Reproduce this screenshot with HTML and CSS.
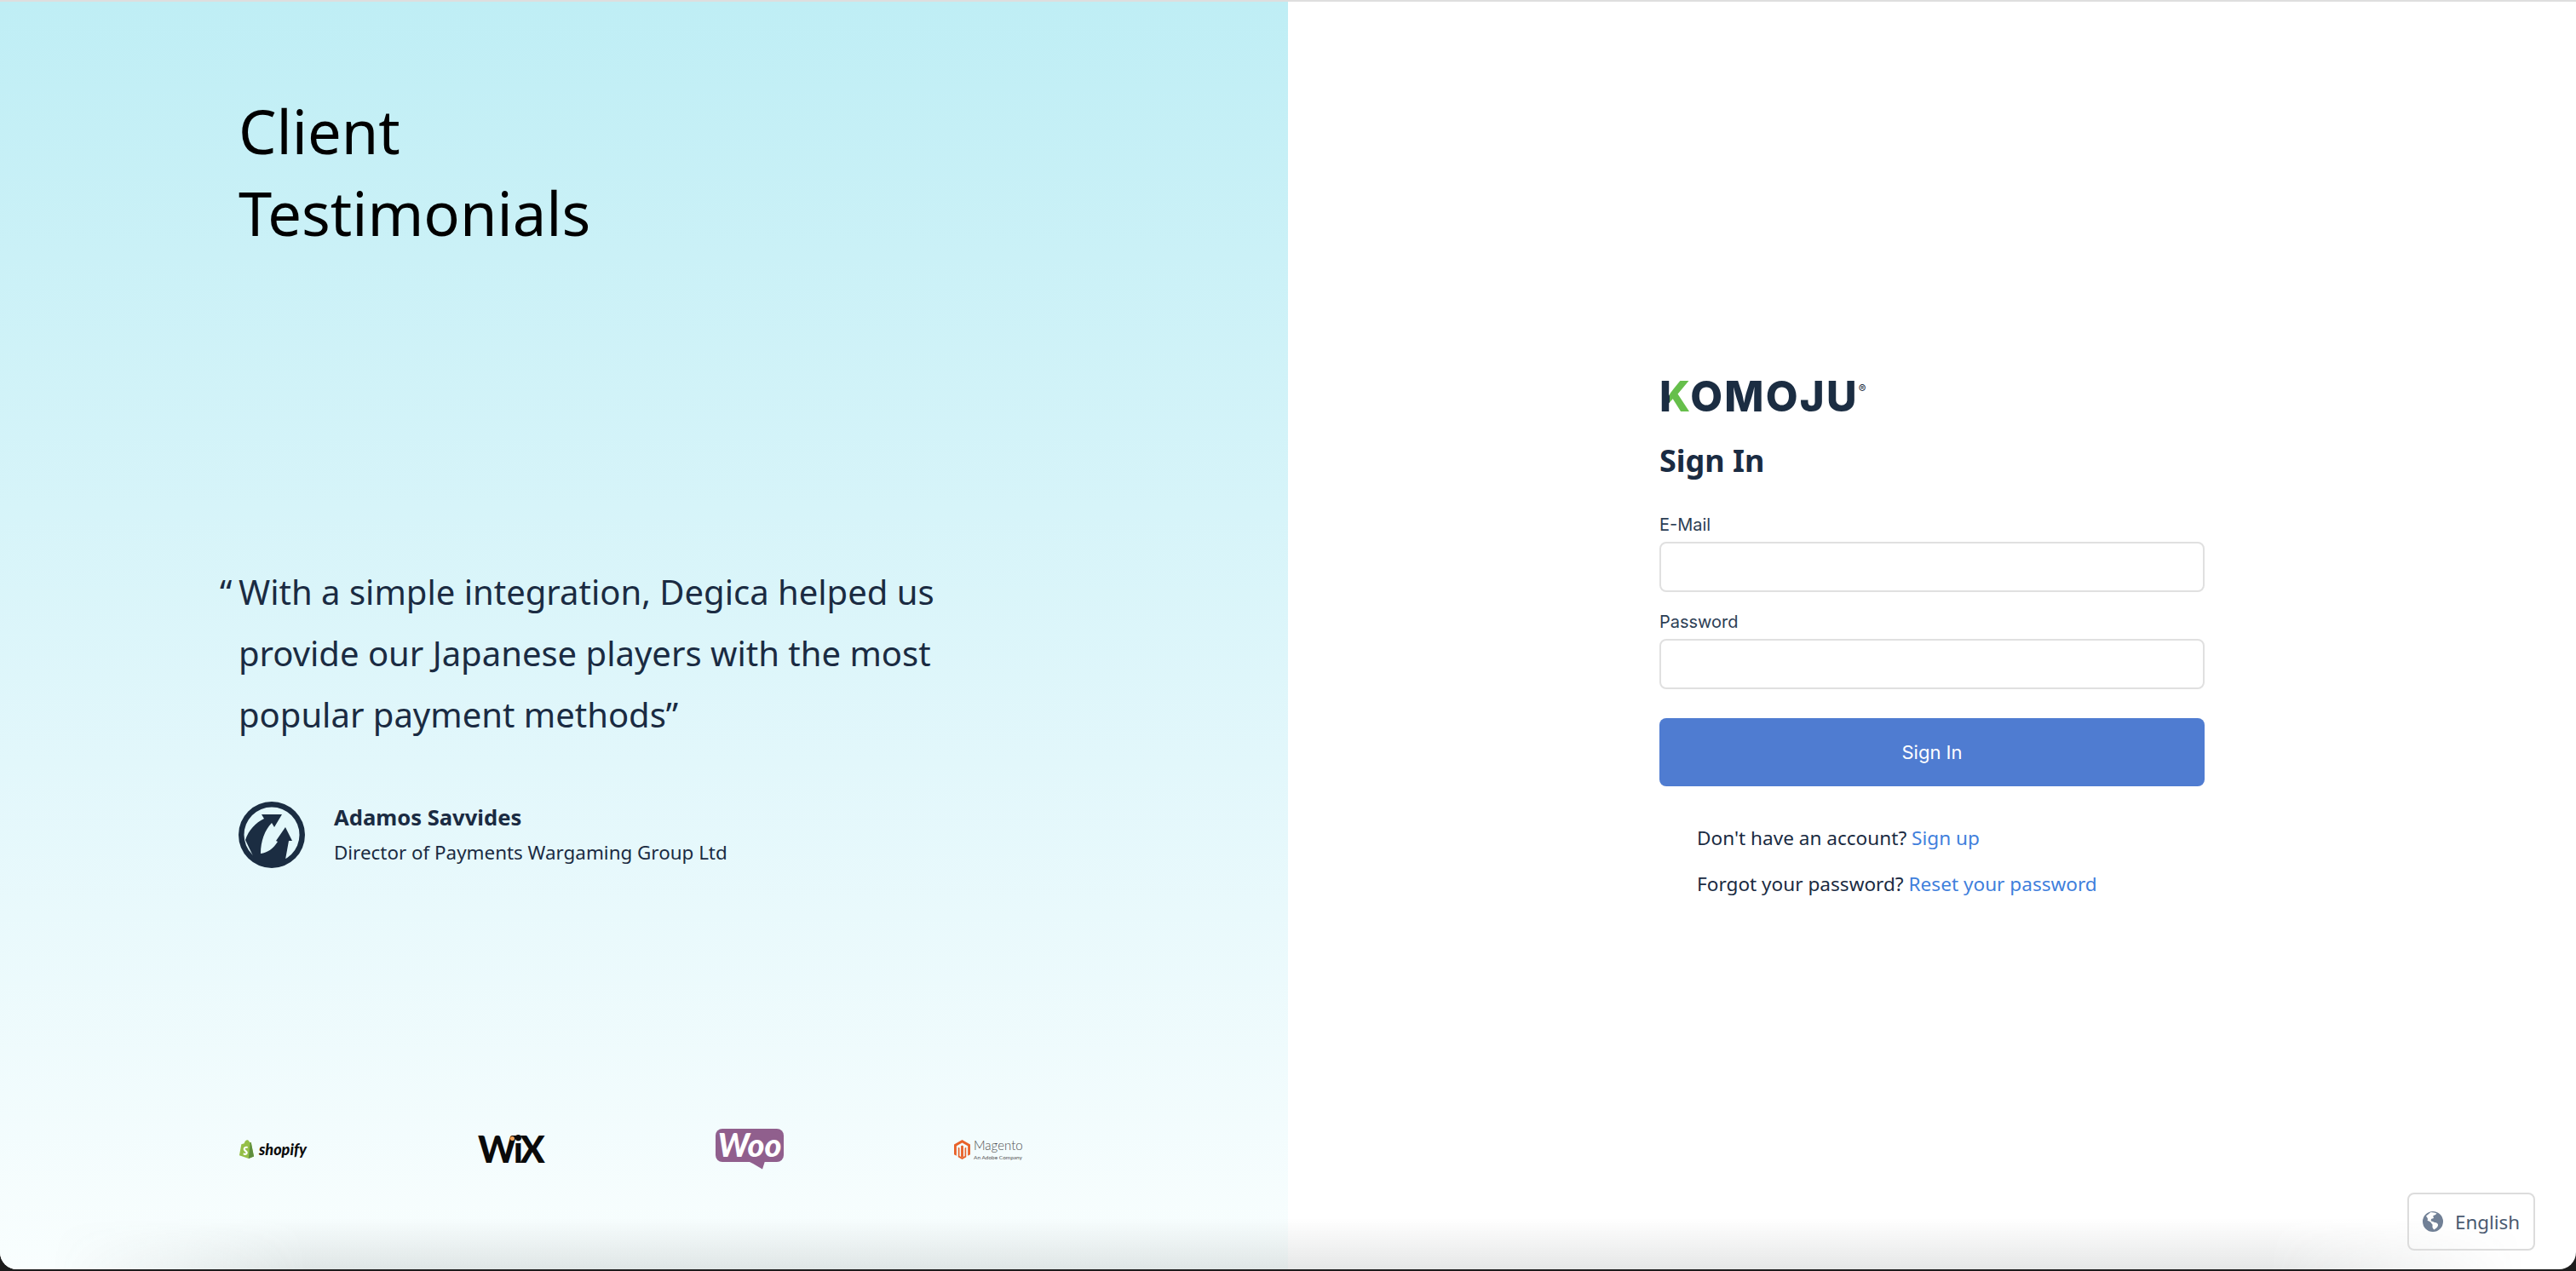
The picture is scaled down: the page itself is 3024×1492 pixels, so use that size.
FILE: index.html
```html
<!DOCTYPE html>
<html lang="en">
<head>
<meta charset="utf-8">
<title>KOMOJU Sign In</title>
<link rel="stylesheet" href="styles.css">
</head>
<body>
<div class="window">
  <main class="panels">
    <section class="promo">
      <h1 class="promo-title">Client<br>Testimonials</h1>
      <blockquote class="quote"><span class="quote-open">“</span>With a simple integration, Degica helped us provide our Japanese players with the most popular payment methods”</blockquote>
      <div class="person">
        <svg class="avatar" viewBox="0 0 78 78" aria-hidden="true">
          <circle cx="39" cy="39" r="39" fill="#1b2d42"/>
          <circle cx="39" cy="39" r="32.5" fill="#e3f8fb"/>
          <path fill="#1b2d42" d="M8 45C12 33 20 25 30 20L27 15 51 15 42 30 39 25C31 33 26 46 26 61 34 60 41 55 46 47L44 46 55 30 63 46 59 46 55 68 45 74 20 70Z"/>
        </svg>
        <div class="person-text">
          <div class="person-name">Adamos Savvides</div>
          <div class="person-role">Director of Payments Wargaming Group Ltd</div>
        </div>
      </div>
      <div class="logos">
        <div class="logo logo-shopify">
          <svg class="shopify-bag" viewBox="0 0 20 23" aria-hidden="true">
            <path fill="#95bf47" d="M1 19 3.500 5.500 7 4.500C8 1 10-.5 12 .5L14 3 15.500 3 19 20.500 12.500 23Z"/>
            <path fill="#5e8e3e" d="M14.500 3 15.500 3 19 20.500 12.500 23Z"/>
            <path fill="#fff" d="M11.500 8.500 11 10.500C9 9.800 8 10.500 8.300 11.500 8.700 12.800 11.500 13.500 11.300 16.200 11 18.800 8 19.500 5.800 18.200L6.300 16C7.500 17 9 17 9 15.900 9 14.700 6 14 6 11.300 6 8.500 9.300 7.500 11.500 8.500Z"/>
          </svg>
          <span class="shopify-word">shopify</span>
        </div>
        <div class="logo logo-wix"><span class="wix-word">WiX</span><i class="wix-dot"></i></div>
        <div class="logo logo-woo">
          <svg class="woo-tail" viewBox="0 0 20 10" aria-hidden="true"><path fill="#905f8d" d="M0 0H20L17 9.500 6 3Z"/></svg>
          <span class="woo-word">Woo</span>
        </div>
        <div class="logo logo-magento">
          <svg class="magento-mark" viewBox="0 0 20 24" aria-hidden="true">
            <path fill="#e8622a" d="M10 0 20 5.800V18L17 19.700V7.500L10 3.500 3 7.500V19.700L0 18V5.800ZM8.500 7.500 10 6.700 11.500 7.500V21L10 22 8.500 21ZM5 9V21.200L10 24 15 21.200V9L13.200 10V20L10 21.800 6.800 20V10Z"/>
          </svg>
          <div class="magento-text">
            <span class="magento-word">Magento</span>
            <span class="magento-sub">An Adobe Company</span>
          </div>
        </div>
      </div>
    </section>
    <section class="auth">
      <form class="auth-form">
        <div class="brand"><span class="brand-k">K</span>OMOJU<sup class="brand-reg">®</sup></div>
        <h2 class="auth-title">Sign In</h2>
        <label class="field-label" for="email">E-Mail</label>
        <input class="field-input" id="email" type="email">
        <label class="field-label field-label-next" for="password">Password</label>
        <input class="field-input" id="password" type="password">
        <button class="submit" type="button">Sign In</button>
        <p class="auth-link auth-link-first">Don't have an account? <a href="#">Sign up</a></p>
        <p class="auth-link">Forgot your password? <a href="#">Reset your password</a></p>
      </form>
    </section>
  </main>
  <div class="bottom-shade"></div>
  <button class="lang" type="button">
    <svg class="lang-globe" viewBox="0 0 24 24" aria-hidden="true">
      <path fill="#718096" fill-rule="evenodd" d="M12 0a12 12 0 1 1 0 24a12 12 0 0 1 0-24ZM4 5.500C6 8 6.500 9 5.500 10.500 7 11.500 9 12 10 13.500 10.500 15 12 15 11.500 17 11 19 12.500 21 13.500 21.500 15 20 17.500 19 18 16.500 18.500 14.500 16 13 14 13 12.500 12.500 11.500 11.500 10 11.500 9.500 10 9.500 9 11 8.500 13 9 13.500 7 12 5.500 13.500 4.500 15.500 4 16.500 2.500 15 1.800 12.500 1 9.500 1 7 2 4 5.500ZM19 5C18 7 19.500 10 22 10.500 21.800 8.500 20.500 6.500 19 5Z"/>
    </svg>
    <span>English</span>
  </button>
</div>
</body>
</html>
```
FILE: styles.css
```css
* { box-sizing: border-box; }
html, body { margin: 0; height: 100%; }
body {
  background: #1c1c1c;
  font-family: "Noto Sans", sans-serif;
  color: #1a2b42;
  overflow: hidden;
}
.window {
  position: relative;
  height: 1490px;
  background: #fff;
  border-top: 2px solid #dedede;
  border-radius: 0 0 20px 20px;
  overflow: hidden;
}
.panels {
  display: grid;
  grid-template-columns: 1512px 1512px;
  height: 100%;
}
.promo {
  display: flex;
  flex-direction: column;
  padding: 104px 0 0 280px;
  background: linear-gradient(180deg, #bfeef5 0%, #e2f7fb 60%, #f9fefe 100%);
}
.promo-title {
  margin: 0;
  font-size: 70.500px;
  line-height: 96px;
  font-weight: 400;
  color: #000;
}
.quote {
  width: 850px;
  margin: 361px 0 0;
  font-size: 40px;
  line-height: 72px;
  text-indent: -22px;
}
.quote-open { display: inline-block; width: 22px; text-indent: 0; }
.person {
  display: flex;
  align-items: center;
  gap: 34px;
  margin-top: 66px;
}
.avatar { width: 78px; height: 78px; flex: none; }
.person-name { font-size: 25.600px; line-height: 38px; font-weight: 700; }
.person-role { font-size: 22.400px; line-height: 36px; margin-top: 4px; }
.logos {
  display: flex;
  align-items: center;
  gap: 200px;
  margin-top: 306px;
  height: 48px;
}
.logo { position: relative; width: 80px; flex: none; }
.logo-shopify { display: flex; align-items: center; gap: 5px; }
.shopify-bag { width: 19px; height: 22px; flex: none; }
.shopify-word {
  font-family: "Lato", sans-serif;
  font-weight: 900;
  font-style: italic;
  font-size: 18px;
  line-height: 22px;
  color: #0b0b0b;
}
.wix-word {
  display: block;
  font-family: "Lato", sans-serif;
  font-weight: 900;
  font-size: 43px;
  line-height: 40px;
  letter-spacing: -3.500px;
  color: #0a0a0a;
  padding-left: 1px;
}
.wix-dot {
  position: absolute;
  left: 39px;
  top: 5px;
  width: 5px;
  height: 5px;
  border-radius: 50%;
  background: #f5a75c;
}
.logo-woo {
  align-self: flex-start;
  height: 39px;
  background: #905f8d;
  border-radius: 8px;
  text-align: center;
}
.woo-tail { position: absolute; left: 38px; top: 38px; width: 20px; height: 10px; }
.woo-word {
  font-family: "Lato", sans-serif;
  font-weight: 900;
  font-style: italic;
  font-size: 38px;
  line-height: 37px;
  color: #fff;
}
.logo-magento { display: flex; align-items: center; gap: 4px; }
.magento-mark { width: 19px; height: 23px; flex: none; }
.magento-text { display: flex; flex-direction: column; }
.magento-word {
  font-family: "Lato", sans-serif;
  font-weight: 300;
  font-size: 15px;
  line-height: 19px;
  color: #4d4d4d;
}
.magento-sub {
  font-family: "Lato", sans-serif;
  font-size: 6.500px;
  line-height: 10px;
  color: #555;
  white-space: nowrap;
}
.auth {
  display: flex;
  align-items: center;
  justify-content: center;
  padding-top: 10px;
}
.auth-form { display: flex; flex-direction: column; width: 640px; }
.brand {
  font-family: "Inter", sans-serif;
  font-weight: 800;
  font-size: 49px;
  line-height: 40px;
  letter-spacing: 2.200px;
  color: #1b2d42;
}
.brand-k {
  background: linear-gradient(90deg, #1b2d42 0 33%, #66bf4b 33% 100%);
  -webkit-background-clip: text;
  background-clip: text;
  -webkit-text-fill-color: transparent;
}
.brand-reg { font-size: 13px; font-weight: 400; vertical-align: 22px; line-height: 0; letter-spacing: 0; }
.auth-title {
  margin: 31px 0 0;
  font-size: 36px;
  line-height: 48px;
  font-weight: 700;
}
.field-label {
  margin-top: 37px;
  margin-bottom: 6px;
  font-family: "Inter", sans-serif;
  font-size: 20px;
  line-height: 28px;
  color: #2c3e55;
}
.field-label-next { margin-top: 21px; }
.field-input {
  width: 100%;
  height: 59px;
  border: 2px solid #e0e0e0;
  border-radius: 8px;
  background: #fff;
}
.submit {
  height: 80px;
  margin-top: 34px;
  border: 0;
  border-radius: 8px;
  background: #4f7cd1;
  color: #fff;
  font-family: "Inter", sans-serif;
  font-size: 22px;
}
.auth-link {
  margin: 17px 0 0 44px;
  font-size: 22.600px;
  line-height: 37px;
}
.auth-link-first { margin-top: 42px; }
.auth-link a { color: #3f80dc; text-decoration: none; }
.bottom-shade {
  position: absolute;
  left: 60px;
  right: 60px;
  bottom: 0;
  height: 60px;
  background: linear-gradient(180deg, rgba(60, 70, 70, 0) 0%, rgba(60, 70, 70, .13) 100%);
  -webkit-mask-image: linear-gradient(90deg, transparent 0, #000 300px, #000 calc(100% - 300px), transparent 100%);
  mask-image: linear-gradient(90deg, transparent 0, #000 300px, #000 calc(100% - 300px), transparent 100%);
  pointer-events: none;
}
.lang {
  position: absolute;
  right: 48px;
  bottom: 22px;
  display: flex;
  align-items: center;
  gap: 14px;
  width: 150px;
  height: 68px;
  padding: 0 0 0 16px;
  border: 2px solid #dcdcdc;
  border-radius: 8px;
  background: transparent;
  color: #4a5a70;
  font-family: "Noto Sans", sans-serif;
  font-size: 22.400px;
}
.lang-globe { width: 24px; height: 24px; flex: none; }
```
